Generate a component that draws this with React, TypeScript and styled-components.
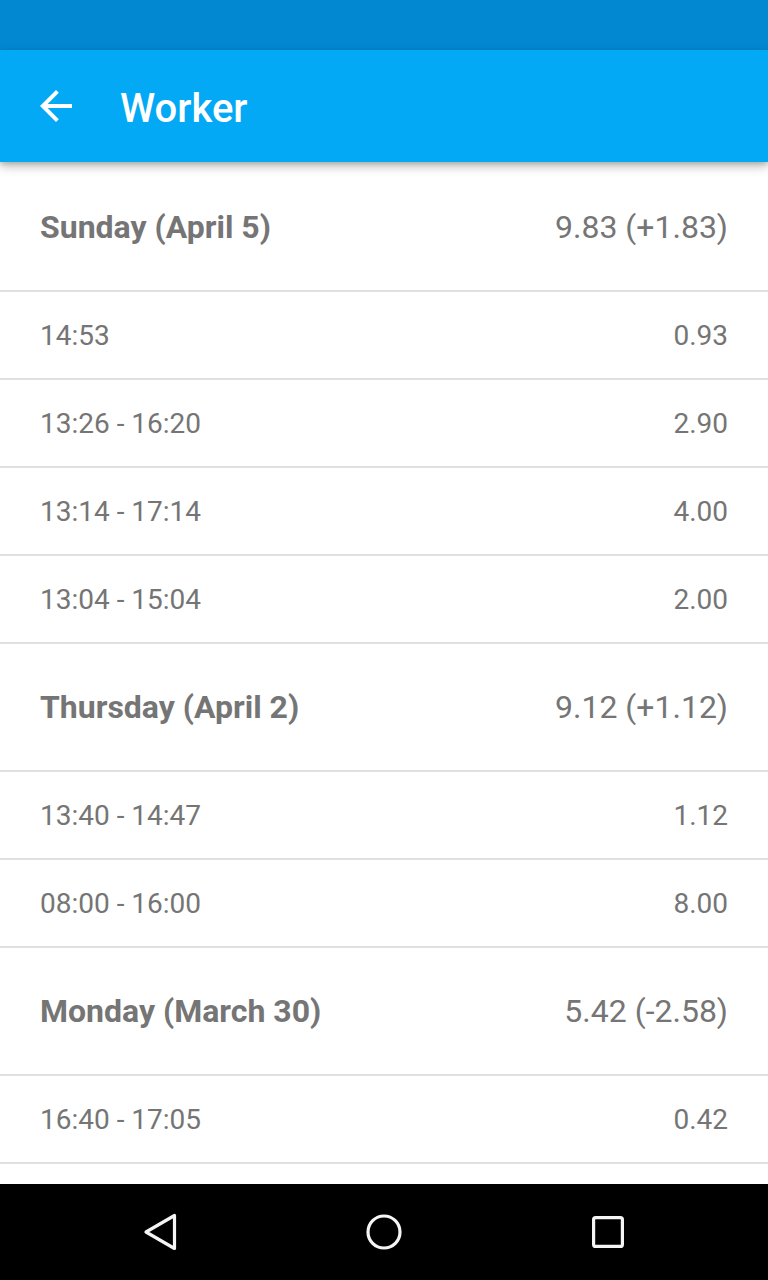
import React from "react";
import styled, { createGlobalStyle } from "styled-components";

const GlobalStyle = createGlobalStyle`
  html, body { margin: 0; padding: 0; background: #ffffff; }
  body { font-family: Roboto, "Noto Sans", Arial, sans-serif; -webkit-font-smoothing: antialiased; }
  * { box-sizing: border-box; }
`;

const Screen = styled.div`
  width: 768px;
  height: 1280px;
  display: flex;
  flex-direction: column;
  overflow: hidden;
  background: #ffffff;
`;

const StatusBar = styled.div`
  height: 50px;
  flex: none;
  background: #0288d1;
`;

const AppBar = styled.header`
  height: 112px;
  flex: none;
  background: #03a9f4;
  display: flex;
  align-items: center;
  padding-left: 32px;
  gap: 40px;
  position: relative;
  z-index: 2;
  box-shadow: 0 4px 10px rgba(0, 0, 0, 0.28), 0 2px 4px rgba(0, 0, 0, 0.12);
`;

const IconButton = styled.button`
  width: 48px;
  height: 48px;
  padding: 0;
  border: 0;
  background: transparent;
  display: flex;
  align-items: center;
  justify-content: center;
`;

const Title = styled.h1`
  margin: 6px 0 0;
  color: #ffffff;
  font-family: Roboto, sans-serif;
  font-weight: 500;
  font-size: 40px;
  line-height: 48px;
`;

const List = styled.main`
  flex: 1;
  overflow: hidden;
  padding-top: 2px;
  background: #ffffff;
`;

const Row = styled.div<{ $header?: boolean }>`
  display: flex;
  align-items: center;
  justify-content: space-between;
  padding: 0 40px;
  height: ${(p) => (p.$header ? "126px" : "86px")};
  border-bottom: 2px solid #e0e0e0;
  box-sizing: content-box;
  color: #757575;
  font-family: Roboto, sans-serif;
  font-size: ${(p) => (p.$header ? "32px" : "28px")};
`;

const Label = styled.span<{ $header?: boolean }>`
  font-weight: ${(p) => (p.$header ? 700 : 400)};
`;

const Value = styled.span`
  font-weight: 400;
`;

const NavBar = styled.nav`
  height: 96px;
  flex: none;
  background: #000000;
  display: flex;
  justify-content: center;
  align-items: center;
`;

const NavButton = styled.div`
  width: 224px;
  height: 96px;
  display: flex;
  align-items: center;
  justify-content: center;
`;

type Entry = { label: string; value: string; header?: boolean };

const entries: Entry[] = [
  { label: "Sunday (April 5)", value: "9.83 (+1.83)", header: true },
  { label: "14:53", value: "0.93" },
  { label: "13:26 - 16:20", value: "2.90" },
  { label: "13:14 - 17:14", value: "4.00" },
  { label: "13:04 - 15:04", value: "2.00" },
  { label: "Thursday (April 2)", value: "9.12 (+1.12)", header: true },
  { label: "13:40 - 14:47", value: "1.12" },
  { label: "08:00 - 16:00", value: "8.00" },
  { label: "Monday (March 30)", value: "5.42 (-2.58)", header: true },
  { label: "16:40 - 17:05", value: "0.42" },
  { label: "", value: "" },
];

export default function App() {
  return (
    <>
      <GlobalStyle />
      <Screen>
        <StatusBar />
        <AppBar>
          <IconButton aria-label="Back">
            <svg width="48" height="48" viewBox="0 0 24 24">
              <path
                fill="#ffffff"
                d="M20 11H7.83l5.59-5.59L12 4l-8 8 8 8 1.41-1.41L7.83 13H20v-2z"
              />
            </svg>
          </IconButton>
          <Title>Worker</Title>
        </AppBar>
        <List>
          {entries.map((e, i) => (
            <Row key={i} $header={e.header}>
              <Label $header={e.header}>{e.label}</Label>
              <Value>{e.value}</Value>
            </Row>
          ))}
        </List>
        <NavBar>
          <NavButton>
            <svg width="48" height="48" viewBox="0 0 48 48">
              <path
                d="M10 24 L38.5 7.5 L38.5 40.5 Z"
                fill="none"
                stroke="#f5f5f5"
                strokeWidth="3.2"
                strokeLinejoin="round"
              />
            </svg>
          </NavButton>
          <NavButton>
            <svg width="48" height="48" viewBox="0 0 48 48">
              <circle cx="24" cy="24" r="16" fill="none" stroke="#f5f5f5" strokeWidth="3.2" />
            </svg>
          </NavButton>
          <NavButton>
            <svg width="48" height="48" viewBox="0 0 48 48">
              <rect
                x="9.6"
                y="9.6"
                width="28.8"
                height="28.8"
                rx="2"
                fill="none"
                stroke="#f5f5f5"
                strokeWidth="3.2"
              />
            </svg>
          </NavButton>
        </NavBar>
      </Screen>
    </>
  );
}
